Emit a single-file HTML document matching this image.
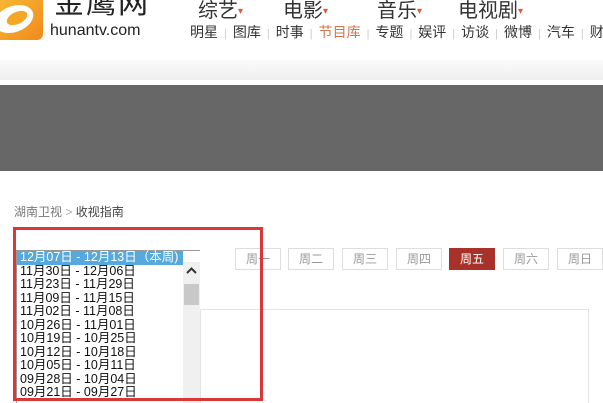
<!DOCTYPE html>
<html><head><meta charset="utf-8"><style>
*{margin:0;padding:0;box-sizing:border-box}
html,body{width:603px;height:403px;overflow:hidden}
body{background:#fff;font-family:"Liberation Sans","Noto Sans CJK SC",sans-serif;position:relative}
.a{position:absolute}
.logo{left:0;top:0;width:43px;height:40px;background:linear-gradient(135deg,#f7b733,#f08a1c);border-radius:0 0 6px 0;overflow:hidden}
.nav1 span{position:absolute;top:-6px;font-size:20px;color:#333}
.nav1 i{color:#e05a3a;font-style:normal;font-size:10px;vertical-align:middle}
.nav2{top:22px;left:190px;font-size:14px;color:#333;white-space:nowrap}
.nav2 b{font-weight:normal;color:#ccc;margin:0 6px;font-size:11px}
.btn{position:absolute;top:248px;width:46px;height:22px;border:1px solid #ddd;font-size:12px;color:#999;text-align:center;line-height:20px}
.list{left:16px;top:250px;width:184px;height:155px;border:1px solid #999;border-right:none;background:#fff;font-size:12.5px;line-height:13.5px;color:#111}
.list div{padding-left:3px;white-space:nowrap}
</style></head><body>
<div class="a" style="left:0;top:0;width:603px;height:60px;background:#fff"></div>
<div class="a" style="left:0;top:60px;width:603px;height:20px;background:linear-gradient(#fbfbfb,#efefef)"></div>
<div class="a logo"><div class="a" style="left:-6px;top:6px;width:40px;height:26px;border-radius:50%;background:#fff;transform:rotate(-20deg)"></div><div class="a" style="left:6px;top:12px;width:22px;height:12px;border-radius:50%;background:#f5a623;transform:rotate(-25deg)"></div></div>
<div class="a" style="left:54px;top:-14px;font-size:30px;line-height:36px;color:#222;letter-spacing:2px">金鹰网</div>
<div class="a" style="left:50px;top:22px;font-size:16px;line-height:18px;color:#222">hunantv.com</div>
<div class="nav1"><span style="left:198px">综艺<i>▾</i></span><span style="left:283px">电影<i>▾</i></span><span style="left:377px">音乐<i>▾</i></span><span style="left:458px">电视剧<i>▾</i></span></div>
<div class="a nav2">明星<b>|</b>图库<b>|</b>时事<b>|</b><span style="color:#d2764f">节目库</span><b>|</b>专题<b>|</b>娱评<b>|</b>访谈<b>|</b>微博<b>|</b>汽车<b>|</b>财</div>
<div class="a" style="left:0;top:85px;width:603px;height:86px;background:#676767"></div>
<div class="a" style="left:14px;top:203px;font-size:12px;color:#777">湖南卫视 <span style="color:#aaa">&gt;</span> <span style="color:#444">收视指南</span></div>
<div class="a" style="left:200px;top:309px;width:389px;height:100px;border:1px solid #e3e3e3"></div>
<div class="btn" style="left:235px">周一</div>
<div class="btn" style="left:288px">周二</div>
<div class="btn" style="left:342px">周三</div>
<div class="btn" style="left:396px">周四</div>
<div class="btn" style="left:449px;background:#a8322a;border-color:#a8322a;color:#fff">周五</div>
<div class="btn" style="left:503px">周六</div>
<div class="btn" style="left:557px">周日</div>
<div class="a list">
<div style="background:#56a9dc;color:#fff;margin-right:17px">12月07日 - 12月13日（本周)</div>
<div>11月30日 - 12月06日</div><div>11月23日 - 11月29日</div><div>11月09日 - 11月15日</div><div>11月02日 - 11月08日</div><div>10月26日 - 11月01日</div><div>10月19日 - 10月25日</div><div>10月12日 - 10月18日</div><div>10月05日 - 10月11日</div><div>09月28日 - 10月04日</div><div>09月21日 - 09月27日</div>
</div>
<div class="a" style="left:183px;top:262px;width:17px;height:141px;background:#f0f0f0"></div>
<svg class="a" style="left:185px;top:266px" width="13" height="9"><path d="M2 7 L6.5 2.5 L11 7" fill="none" stroke="#333" stroke-width="2"/></svg>
<div class="a" style="left:184px;top:284px;width:15px;height:21px;background:#c8c8c8"></div>
<div class="a" style="left:13px;top:227px;width:250px;height:174px;border:3px solid #d9383a"></div>
</body></html>
